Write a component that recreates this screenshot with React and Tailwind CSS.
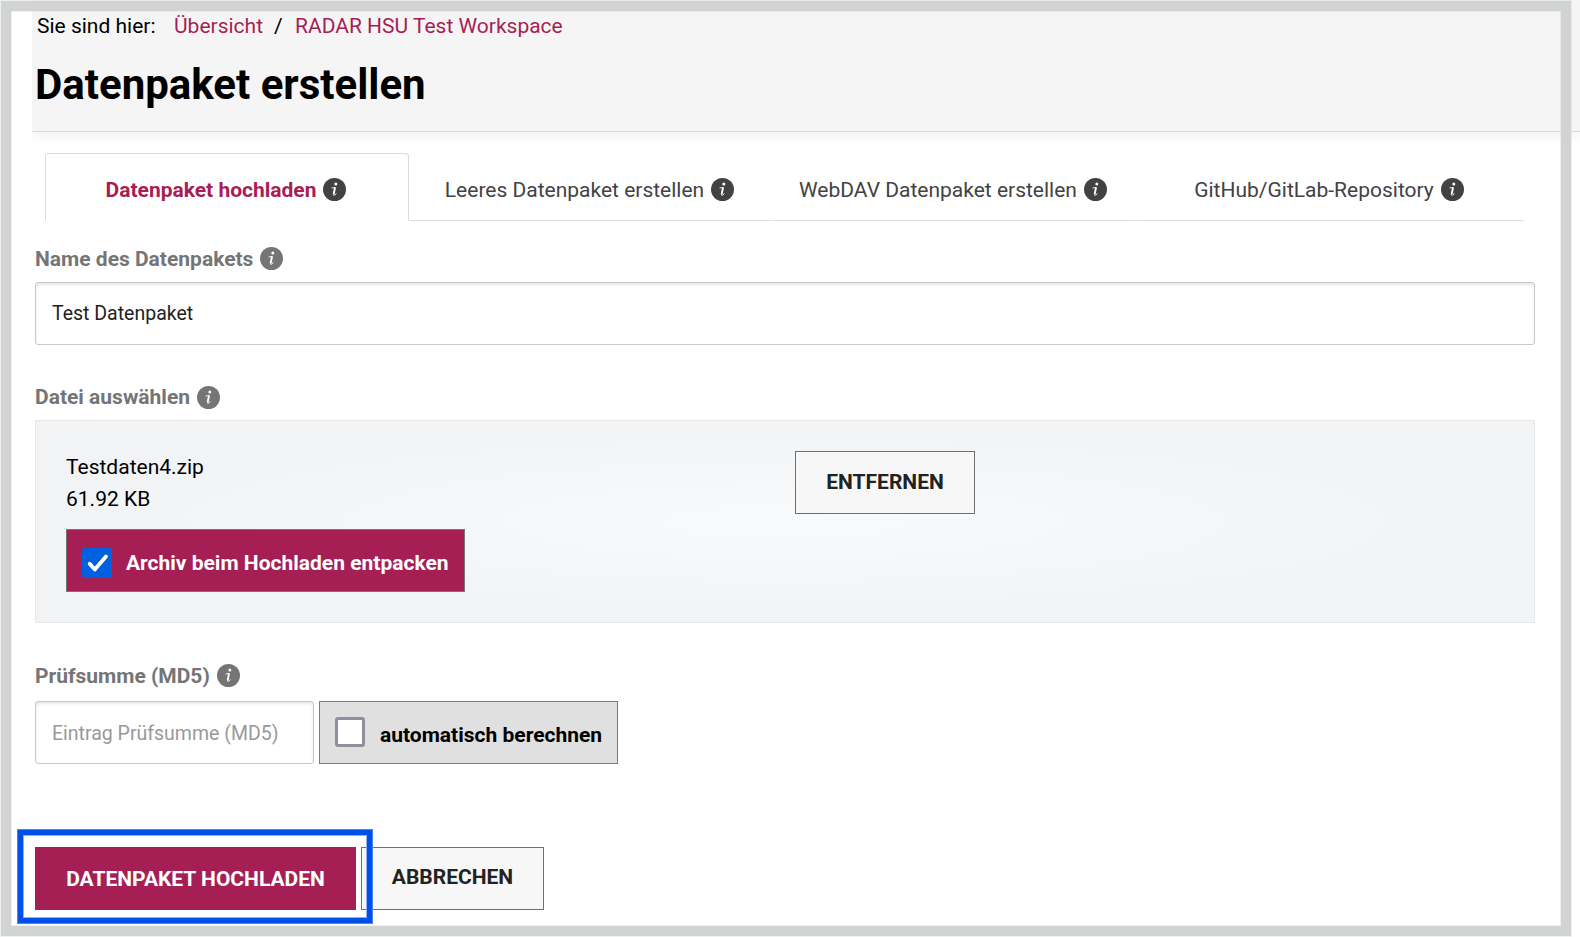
import React, { useState } from "react";

const tabs = [
  { id: "upload", label: "Datenpaket hochladen", width: "w-[364px]" },
  { id: "empty", label: "Leeres Datenpaket erstellen", width: "w-[363px]" },
  { id: "webdav", label: "WebDAV Datenpaket erstellen", width: "w-[364px]" },
  { id: "git", label: "GitHub/GitLab-Repository", width: "w-[388px]" },
];

function InfoIcon() {
  return (
    <svg viewBox="0 0 23 23" fill="none" className="size-[23px] shrink-0">
      <circle cx="11.5" cy="11.5" r="11.5" fill="currentColor" />
      <circle cx="12.8" cy="5.9" r="1.5" fill="white" />
      <path d="M8.6 10 L11.8 9.5" stroke="white" strokeWidth="0.9" />
      <path d="M12.1 9.2 L10.6 16.4" stroke="white" strokeWidth="1.9" />
      <path d="M10.1 16.9 Q11.4 18 13.4 15.6" stroke="white" strokeWidth="1" />
    </svg>
  );
}

function FieldLabel({ text, textClass }) {
  return (
    <div className="flex h-6 items-center gap-[7px] leading-6 font-bold text-[#757575]">
      <span className={textClass}>{text}</span>
      <InfoIcon />
    </div>
  );
}

function Tab({ tab, active, onClick }) {
  const state = active
    ? "rounded-t-[3px] border-[#dcdcdc] border-b-transparent font-bold text-[#a71e54]"
    : "border-transparent border-b-[#dcdcdc] text-[#424244]";

  return (
    <button
      onClick={onClick}
      className={`flex h-[68px] items-center justify-center gap-[7px] border pt-[5px] pr-0.5 ${tab.width} ${state}`}
    >
      <span className="pt-0.5">{tab.label}</span>
      <span className="text-[#424244]">
        <InfoIcon />
      </span>
    </button>
  );
}

function Checkbox({ checked }) {
  if (!checked) {
    return <span className="block size-[30px] rounded-[3px] border-3 border-[#8f8f9d] bg-white" />;
  }
  return (
    <span className="block size-[30px] rounded-[3px] bg-[#0060df]">
      <svg viewBox="0 0 30 30" fill="none" className="size-full">
        <path
          d="M7.7 15.8 L12.8 21.6 L24 8.6"
          stroke="white"
          strokeWidth="3.8"
          strokeLinecap="round"
          strokeLinejoin="round"
        />
      </svg>
    </span>
  );
}

export default function App() {
  const [activeTab, setActiveTab] = useState("upload");
  const [name, setName] = useState("Test Datenpaket");
  const [unpack, setUnpack] = useState(true);
  const [autoSum, setAutoSum] = useState(false);

  return (
    <div className="relative h-[937px] w-[1580px] overflow-hidden bg-white font-[Roboto,sans-serif] text-[21px] text-black">
      <header className="ml-8 h-[132px] border-b border-[#dadada] bg-[#f5f5f5] pt-3.5 shadow-[0_4px_12px_rgba(0,0,0,0.06)] [clip-path:inset(0_0_-20px_0)]">
        <nav className="flex pl-[5px] leading-6">
          <span className="w-[137px]">Sie sind hier:</span>
          <a className="w-[100px] text-[#a71e54]">Übersicht</a>
          <span className="w-[21px]">/</span>
          <a className="text-[#a71e54]">RADAR HSU Test Workspace</a>
        </nav>
        <h1 className="mt-[23px] pl-[3px] text-[42px] leading-[48px] font-bold">Datenpaket erstellen</h1>
      </header>

      <main className="pt-[21px] pl-[35px]">
        <div className="flex pl-2.5">
          {tabs.map((tab) => (
            <Tab key={tab.id} tab={tab} active={tab.id === activeTab} onClick={() => setActiveTab(tab.id)} />
          ))}
        </div>

        <section className="mt-[25px]">
          <FieldLabel text="Name des Datenpakets" textClass="pt-0.5" />
          <input
            value={name}
            onChange={(e) => setName(e.target.value)}
            className="mt-3 block h-[63px] w-[1500px] rounded-[3px] border border-[#c8c8c8] px-4 text-[19.5px] text-[#222] shadow-[inset_0_2px_3px_rgba(0,0,0,0.1)]"
          />
        </section>

        <section className="mt-10">
          <FieldLabel text="Datei auswählen" />
          <div className="mt-[11px] flex h-[203px] w-[1500px] border border-[#e6e7e9] bg-[radial-gradient(ellipse_at_center,#f9fafc_0%,#f1f3f5_70%)] pt-[30px] pl-[30px]">
            <div className="w-[729px] leading-8">
              <p>Testdaten4.zip</p>
              <p>61.92 KB</p>
              <button
                onClick={() => setUnpack(!unpack)}
                className="mt-[14px] flex h-[63px] w-[399px] items-center gap-3.5 border border-[#777] bg-[#a51f55] pt-[5px] pl-[15px] font-bold text-white"
              >
                <Checkbox checked={unpack} />
                <span>Archiv beim Hochladen entpacken</span>
              </button>
            </div>
            <button className="h-[63px] w-[180px] border border-[#6f6f70] bg-[#f7f7f7] font-bold text-[#222]">
              ENTFERNEN
            </button>
          </div>
        </section>

        <section className="mt-10">
          <FieldLabel text="Prüfsumme (MD5)" textClass="pt-0.5" />
          <div className="mt-3.5 flex gap-[5px]">
            <input
              placeholder="Eintrag Prüfsumme (MD5)"
              className="h-[63px] w-[279px] rounded-[3px] border border-[#c8c8c8] px-4 pt-0.5 text-[19.5px] shadow-[inset_0_2px_3px_rgba(0,0,0,0.1)] placeholder:text-[#999]"
            />
            <button
              onClick={() => setAutoSum(!autoSum)}
              className="flex h-[63px] w-[299px] items-center gap-[15px] border border-[#7c7c7c] bg-[#e0e0e0] pb-0.5 pl-[15px] font-bold"
            >
              <Checkbox checked={autoSum} />
              <span className="pt-2">automatisch berechnen</span>
            </button>
          </div>
        </section>

        <div className="mt-[83px] flex gap-[5px]">
          <button className="h-[63px] w-[321px] bg-[#a51f55] pt-0.5 font-bold text-white">DATENPAKET HOCHLADEN</button>
          <button className="h-[63px] w-[183px] border border-[#6f6f70] bg-[#f7f7f7] pb-0.5 font-bold text-[#222]">
            ABBRECHEN
          </button>
        </div>
      </main>

      {/* window frame and highlight */}
      <div className="pointer-events-none absolute top-px left-px h-[935px] w-[1570px] border-10 border-[#d1d3d5] shadow-[0_0_0_1px_rgba(209,211,213,0.35),inset_0_0_0_1px_rgba(209,211,213,0.35)]" />
      <div className="pointer-events-none absolute top-[830px] left-[18px] h-[93px] w-[354px] border-5 border-[#004fe8] shadow-[0_0_0_1px_#4b87f0,inset_0_0_0_1px_#8fb2f6]" />
    </div>
  );
}
